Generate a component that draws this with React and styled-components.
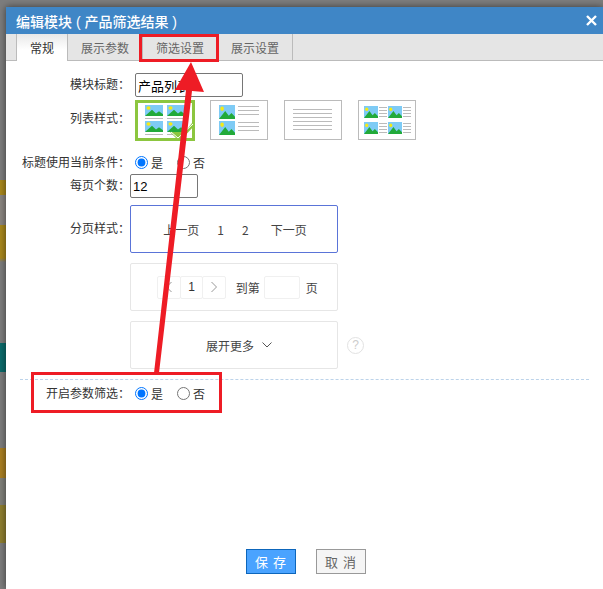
import React from "react";
import styled, { createGlobalStyle } from "styled-components";

const GlobalStyle = createGlobalStyle`
  html, body {
    margin: 0;
    padding: 0;
    background: #777;
    overflow: hidden;
  }
  body {
    font-family: "Liberation Sans", "Noto Sans CJK SC", sans-serif;
    font-size: 12px;
    color: #333;
  }
`;

const Page = styled.div`
  position: relative;
  box-sizing: border-box;
  width: 603px;
  height: 589px;
  padding: 7px 0 0 6px;
  overflow: hidden;
  background: linear-gradient(
    to bottom,
    #7d7d7d 0 180px,
    #a8871c 180px 195px,
    #8a8580 195px 225px,
    #a8871c 225px 258px,
    #7d7d7d 262px 343px,
    #0b6b6b 343px 372px,
    #7d7d7d 372px 448px,
    #a97f22 448px 478px,
    #80807a 478px 505px,
    #8f7f30 505px 543px,
    #7d7d7d 543px
  );
`;

const Dialog = styled.div`
  display: flex;
  flex-direction: column;
  height: 582px;
  background: #fff;
  box-shadow: 0 0 7px rgba(0, 0, 0, 0.55);
`;

const TitleBar = styled.div`
  display: flex;
  align-items: center;
  justify-content: space-between;
  flex: none;
  height: 27px;
  padding: 0 6px 0 10px;
  background: #3f86c6;
  color: #fff;
  font-size: 14px;
  font-weight: 500;
`;

const CloseIcon = () => (
  <svg width="11" height="11" viewBox="0 0 11 11">
    <path d="M1 1l9 9M10 1l-9 9" stroke="#fff" strokeWidth="2.4" fill="none" />
  </svg>
);

const TabBar = styled.div`
  display: flex;
  flex: none;
  box-sizing: border-box;
  height: 27px;
  padding-left: 10px;
  background: #e5e5e5;
  border-bottom: 1px solid #bbb;
`;

const Tab = styled.div`
  display: flex;
  align-items: center;
  justify-content: center;
  box-sizing: border-box;
  width: ${(p) => (p.$active ? "52px" : "75px")};
  height: ${(p) => (p.$active ? "27px" : "26px")};
  border-right: 1px solid #bbb;
  border-left: ${(p) => (p.$active ? "1px solid #bbb" : "none")};
  background: ${(p) => (p.$active ? "linear-gradient(#e8e8e8, #fff 16px)" : "transparent")};
  color: ${(p) => (p.$active ? "#333" : "#666")};
`;

const Form = styled.div`
  display: flex;
  flex-direction: column;
  flex: 1;
  padding-top: 12px;
`;

const Row = styled.div`
  display: flex;
  align-items: center;
  margin-bottom: ${(p) => p.$gap || 0}px;
`;

const Label = styled.label`
  flex: none;
  width: 124px;
  margin-top: ${(p) => p.$lift || 0}px;
  text-align: right;
  color: #333;
  line-height: 16px;
`;

const TextInput = styled.input`
  box-sizing: border-box;
  width: ${(p) => p.$width}px;
  height: 24px;
  margin-left: ${(p) => p.$offset || 0}px;
  padding: 0 2px;
  border: 1px solid #767676;
  border-radius: 2px;
  background: #fff;
  color: #000;
  font-family: "Liberation Sans", "Noto Sans CJK SC", sans-serif;
  font-size: 13px;
  outline: none;
`;

const StyleList = styled.div`
  display: flex;
  gap: 16px;
  margin-left: 5px;
`;

const StyleCard = styled.div`
  position: relative;
  box-sizing: border-box;
  width: ${(p) => (p.$active ? "60px" : "58px")};
  height: ${(p) => (p.$active ? "41px" : "40px")};
  margin-right: ${(p) => (p.$active ? "-1px" : "0")};
  border: ${(p) => (p.$active ? "3px solid #8cc63f" : "1px solid #bbb")};
  background: #fff;
`;

const CardArt = styled.svg`
  display: block;
  width: 100%;
  height: 100%;
`;

const CheckBadge = styled.svg`
  position: absolute;
  right: -3px;
  bottom: -3px;
  width: 26px;
  height: 18px;
`;

const RadioRow = styled.div`
  display: flex;
  align-items: center;
  margin-left: 5px;
`;

const RadioLabel = styled.label`
  display: flex;
  align-items: center;
  width: 42px;
  color: #333;
`;

const Radio = styled.input`
  flex: none;
  width: 13px;
  height: 13px;
  margin: 0 3px 0 0;
`;

const OptionCard = styled.div`
  display: flex;
  align-items: center;
  justify-content: center;
  box-sizing: border-box;
  width: 208px;
  height: 48px;
  padding-left: ${(p) => p.$shift || 0}px;
  border: 1px solid ${(p) => (p.$selected ? "#5a74d8" : "#e6e6e6")};
  border-radius: 2px;
  color: #444;
`;

const PagerItem = styled.span`
  padding: 0 9px;
  padding-right: ${(p) => p.$padRight || 9}px;
  padding-left: ${(p) => p.$padLeft || 9}px;
  font-family: "Noto Sans CJK SC", sans-serif;
`;

const Stepper = styled.div`
  display: flex;
  margin-right: 10px;
`;

const StepCell = styled.div`
  display: flex;
  align-items: center;
  justify-content: center;
  box-sizing: border-box;
  width: 23.5px;
  height: 23px;
  border: 1px solid #f0f0f0;
  margin-left: -1px;
  border-radius: 2px;
  color: #333;
`;

const JumpBox = styled.div`
  box-sizing: border-box;
  width: 36px;
  height: 23px;
  margin: 0 6px 0 4px;
  border: 1px solid #f0f0f0;
  border-radius: 2px;
`;

const MoreArrow = styled.svg`
  width: 10px;
  height: 6px;
  margin-left: 8px;
`;

const HelpIcon = styled.div`
  display: flex;
  align-items: center;
  justify-content: center;
  box-sizing: border-box;
  width: 17px;
  height: 17px;
  margin-left: 9px;
  border: 1px solid #e2e2e2;
  border-radius: 50%;
  color: #ccc;
  font-size: 12px;
`;

const Divider = styled.div`
  margin: 10px 14px 5px;
  border-top: 1px dashed #bcd3ea;
`;

const Footer = styled.div`
  display: flex;
  justify-content: center;
  gap: 20px;
  flex: none;
  padding-bottom: 15px;
  margin-left: 3px;
`;

const Button = styled.button`
  box-sizing: border-box;
  width: 50px;
  height: 25px;
  padding: 0;
  border: 1px solid ${(p) => (p.$primary ? "#0d66bb" : "#999")};
  background: ${(p) => (p.$primary ? "#4aa3ff" : "#f5f5f5")};
  color: ${(p) => (p.$primary ? "#fff" : "#666")};
  font-family: "Noto Sans CJK SC", sans-serif;
  font-size: 13px;
  letter-spacing: 1px;
`;

const RedBox = styled.div`
  position: absolute;
  left: ${(p) => p.$x}px;
  top: ${(p) => p.$y}px;
  box-sizing: border-box;
  width: ${(p) => p.$w}px;
  height: ${(p) => p.$h}px;
  border: 3px solid #ee1c25;
  pointer-events: none;
`;

const ArrowLayer = styled.svg`
  position: absolute;
  left: 0;
  top: 0;
  width: 603px;
  height: 589px;
  pointer-events: none;
`;

// little landscape picture used on the list style cards
const Thumb = ({ x, y, w, h }) => (
  <g transform={`translate(${x} ${y}) scale(${w / 18} ${h / 13})`}>
    <rect width="18" height="13" fill="#7ecbf5" />
    <circle cx="3.5" cy="3.5" r="2" fill="#f5ea14" />
    <path d="M0 13L7 5.5L11 10L14 7.5L18 11V13Z" fill="#22aa3a" />
  </g>
);

const Lines = ({ x, y, w, n, step }) => (
  <g stroke="#bbb" strokeWidth="1">
    {Array.from({ length: n }).map((_, i) => (
      <line key={i} x1={x} x2={x + w} y1={y + i * step + 0.5} y2={y + i * step + 0.5} />
    ))}
  </g>
);

const GridArt = () => (
  <CardArt viewBox="0 0 54 35">
    <Thumb x={7} y={2} w={18} h={11} />
    <Thumb x={29} y={2} w={18} h={11} />
    <Lines x={7} y={15} w={18} n={1} step={1} />
    <Lines x={29} y={15} w={18} n={1} step={1} />
    <Thumb x={7} y={18} w={18} h={11} />
    <Thumb x={29} y={18} w={18} h={11} />
    <Lines x={7} y={31} w={18} n={1} step={1} />
    <Lines x={29} y={31} w={18} n={1} step={1} />
  </CardArt>
);

const ListArt = () => (
  <CardArt viewBox="0 0 56 38">
    <Thumb x={8} y={4} w={16} h={14} />
    <Lines x={27} y={5} w={21} n={3} step={4} />
    <Thumb x={8} y={20} w={16} h={14} />
    <Lines x={27} y={21} w={21} n={3} step={4} />
  </CardArt>
);

const TextArt = () => (
  <CardArt viewBox="0 0 56 38">
    <Lines x={8} y={8} w={39} n={6} step={4} />
  </CardArt>
);

const DoubleArt = () => (
  <CardArt viewBox="0 0 56 38">
    <Thumb x={5} y={5} w={14} h={12} />
    <Lines x={20} y={6} w={8} n={4} step={3} />
    <Thumb x={29} y={5} w={14} h={12} />
    <Lines x={44} y={6} w={8} n={4} step={3} />
    <Thumb x={5} y={21} w={14} h={12} />
    <Lines x={20} y={22} w={8} n={4} step={3} />
    <Thumb x={29} y={21} w={14} h={12} />
    <Lines x={44} y={22} w={8} n={4} step={3} />
  </CardArt>
);

const Chevron = ({ dir }) => (
  <svg width="8" height="12" viewBox="0 0 8 12">
    <path
      d={dir === "left" ? "M6.5 1L1.5 6L6.5 11" : "M1.5 1L6.5 6L1.5 11"}
      stroke="#999"
      strokeWidth="1"
      fill="none"
    />
  </svg>
);

const App = () => {
  return (
    <Page>
      <GlobalStyle />
      <Dialog>
        <TitleBar>
          <span>编辑模块 ( 产品筛选结果 )</span>
          <CloseIcon />
        </TitleBar>
        <TabBar>
          <Tab $active>常规</Tab>
          <Tab>展示参数</Tab>
          <Tab>筛选设置</Tab>
          <Tab>展示设置</Tab>
        </TabBar>
        <Form>
          <Row $gap={3}>
            <Label>模块标题：</Label>
            <TextInput $width={108} $offset={5} defaultValue="产品列表" />
          </Row>
          <Row $gap={13}>
            <Label $lift={-4}>列表样式：</Label>
            <StyleList>
              <StyleCard $active>
                <GridArt />
                <CheckBadge viewBox="0 0 26 18">
                  <path d="M1 9L16 9L23 0L26 0L26 2L11 18L8 16Z" fill="#8cc63f" />
                  <path d="M2 9L9 15L24 1" stroke="#fff" strokeWidth="1" fill="none" />
                </CheckBadge>
              </StyleCard>
              <StyleCard>
                <ListArt />
              </StyleCard>
              <StyleCard>
                <TextArt />
              </StyleCard>
              <StyleCard>
                <DoubleArt />
              </StyleCard>
            </StyleList>
          </Row>
          <Row $gap={3}>
            <Label>标题使用当前条件：</Label>
            <RadioRow>
              <RadioLabel>
                <Radio type="radio" name="useCondition" defaultChecked />是
              </RadioLabel>
              <RadioLabel>
                <Radio type="radio" name="useCondition" />否
              </RadioLabel>
            </RadioRow>
          </Row>
          <Row $gap={7}>
            <Label>每页个数：</Label>
            <TextInput $width={68} defaultValue="12" />
          </Row>
          <Row $gap={10}>
            <Label>分页样式：</Label>
            <OptionCard $selected $shift={2}>
              <PagerItem>上一页</PagerItem>
              <PagerItem>1</PagerItem>
              <PagerItem $padRight={12}>2</PagerItem>
              <PagerItem $padLeft={10}>下一页</PagerItem>
            </OptionCard>
          </Row>
          <Row $gap={10}>
            <Label />
            <OptionCard $shift={8}>
              <Stepper>
                <StepCell>
                  <Chevron dir="left" />
                </StepCell>
                <StepCell>1</StepCell>
                <StepCell>
                  <Chevron dir="right" />
                </StepCell>
              </Stepper>
              到第
              <JumpBox />页
            </OptionCard>
          </Row>
          <Row>
            <Label />
            <OptionCard $shift={10}>
              展开更多
              <MoreArrow viewBox="0 0 10 6">
                <path d="M0.5 0.5L5 5L9.5 0.5" stroke="#555" strokeWidth="1" fill="none" />
              </MoreArrow>
            </OptionCard>
            <HelpIcon>?</HelpIcon>
          </Row>
          <Divider />
          <Row>
            <Label>开启参数筛选：</Label>
            <RadioRow>
              <RadioLabel>
                <Radio type="radio" name="paramFilter" defaultChecked />是
              </RadioLabel>
              <RadioLabel>
                <Radio type="radio" name="paramFilter" />否
              </RadioLabel>
            </RadioRow>
          </Row>
        </Form>
        <Footer>
          <Button $primary>保 存</Button>
          <Button>取 消</Button>
        </Footer>
      </Dialog>
      {/* red annotations drawn over the screenshot */}
      <RedBox $x={139} $y={34} $w={80} $h={28} />
      <RedBox $x={31} $y={372} $w={191} $h={41} />
      <ArrowLayer viewBox="0 0 603 589">
        <path d="M191 62L204 92L192 91L159 373L154 373L186 90L175 90Z" fill="#ee1c25" />
      </ArrowLayer>
    </Page>
  );
};

export default App;
